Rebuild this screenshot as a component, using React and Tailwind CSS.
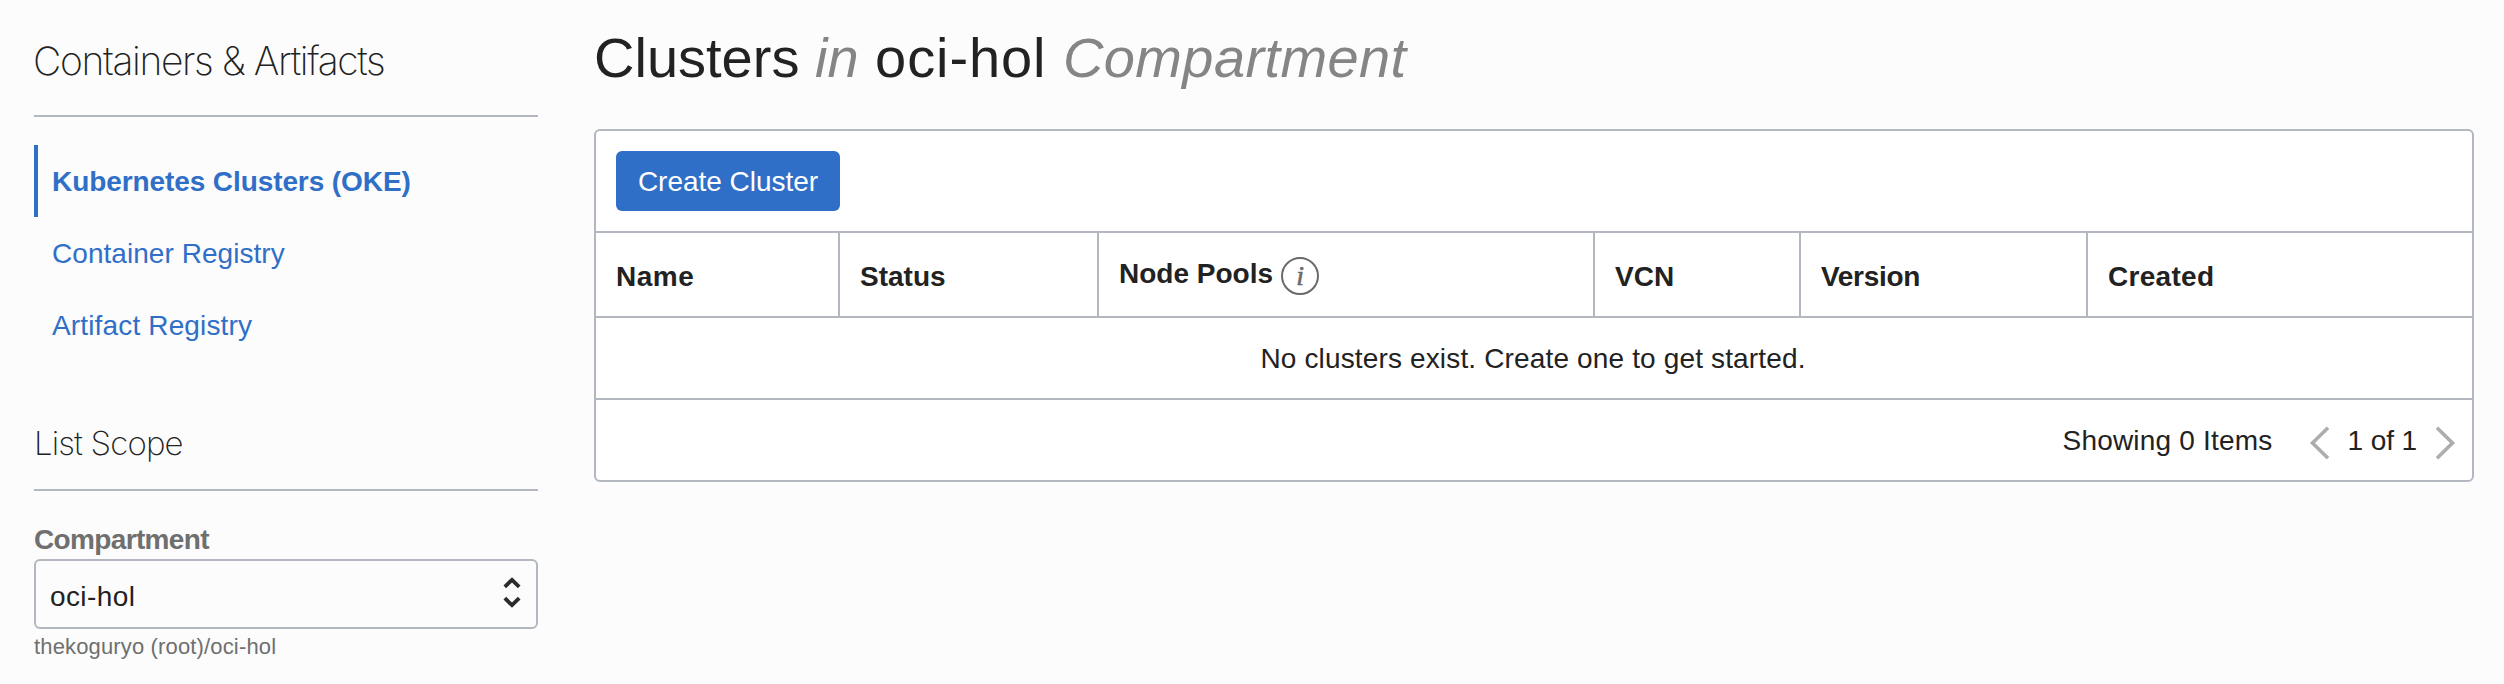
const NAV_ITEMS = [
  { label: "Kubernetes Clusters (OKE)", active: true, className: "font-bold tracking-[-0.09px]" },
  { label: "Container Registry", className: "tracking-[0.05px]" },
  { label: "Artifact Registry", className: "tracking-[0.15px]" },
];

const HEADING_FONT = "font-['Inter','Liberation_Sans',sans-serif]";

function Sidebar() {
  return (
    <aside className="w-[504px] shrink-0">
      <h2
        className={`${HEADING_FONT} h-[117px] whitespace-nowrap border-b-2 border-[#b3b8c0] pt-[41px] text-[39px] font-[150] leading-[40px] tracking-[-1.35px] text-[#222]`}
      >
        <span className="-ml-px">Containers &amp; Artifacts</span>
      </h2>

      <nav className="mt-7 flex flex-col">
        {NAV_ITEMS.map((item) => (
          <a
            key={item.label}
            href="#"
            className={`flex h-18 items-center border-l-4 pl-[14px] pt-0.5 text-[28px] leading-8 text-[#306fc8] ${
              item.active ? "border-[#306fc8]" : "border-transparent"
            } ${item.className}`}
          >
            {item.label}
          </a>
        ))}
      </nav>

      <h3
        className={`${HEADING_FONT} mt-[62px] h-[68px] whitespace-nowrap border-b-2 border-[#b3b8c0] text-[33px] font-[150] leading-[40px] tracking-[-0.85px] text-[#222]`}
      >
        List Scope
      </h3>

      <div className="mt-[32px] flex flex-col">
        <label className="h-9 text-[28px] font-bold leading-[34px] tracking-[-0.65px] text-[#6f6f6f]">
          Compartment
        </label>
        <button
          type="button"
          className="flex h-[70px] items-center justify-between rounded-md border-2 border-[#b3b8c0] pl-[14px] pr-[15px] text-[28px] leading-8 tracking-[0.4px] text-[#222]"
        >
          <span className="pt-[5px]">oci-hol</span>
          <svg width="18" height="32" viewBox="0 0 18 32" fill="none" stroke="#2b2b2b" strokeWidth="3.800" className="mb-0.5">
            <path d="M1.800 9.800 9 2.800l7.200 7" />
            <path d="M1.800 21.200 9 28.200l7.200-7" />
          </svg>
        </button>
        <p className="mt-1 text-[22px] leading-7 tracking-[0.15px] text-[#6f6f6f]">thekoguryo (root)/oci-hol</p>
      </div>
    </aside>
  );
}

function InfoIcon() {
  return (
    <span className="flex size-[38px] items-center justify-center rounded-full border-2 border-[#6a6a6a] font-['Liberation_Serif',serif] text-[28px] italic font-normal leading-none text-[#6a6a6a] [-webkit-text-stroke:0.6px_#6a6a6a]">
      i
    </span>
  );
}

function HeaderCell({ children, className = "" }) {
  return (
    <div role="columnheader" className={`flex items-center border-[#b3b8c0] pl-5 pt-1 ${className}`}>
      {children}
    </div>
  );
}

function ClusterTable() {
  return (
    <section className="mt-[55px] flex h-[353px] w-[1880px] flex-col rounded-md border-2 border-[#b3b8c0] bg-white text-[28px] leading-8">
      <div className="flex h-[100px] items-center pl-5">
        <button
          type="button"
          className="h-[60px] w-[224px] rounded-md bg-[#306fc8] pt-0.5 text-center tracking-[-0.02px] text-white"
        >
          Create Cluster
        </button>
      </div>

      <div
        role="row"
        className="grid h-[87px] grid-cols-[244px_259px_496px_206px_287px_1fr] border-y-2 border-[#b3b8c0] font-bold"
      >
        <HeaderCell className="border-r-2 tracking-[0.5px]">Name</HeaderCell>
        <HeaderCell className="border-r-2">Status</HeaderCell>
        <HeaderCell className="border-r-2">
          <span className="-mt-[6px]">Node Pools</span>
          <span className="-mt-0.5 ml-2">
            <InfoIcon />
          </span>
        </HeaderCell>
        <HeaderCell className="border-r-2">VCN</HeaderCell>
        <HeaderCell className="border-r-2 tracking-[-0.3px]">Version</HeaderCell>
        <HeaderCell className="tracking-[0.3px]">Created</HeaderCell>
      </div>

      <div className="flex h-[82px] items-center justify-center border-b-2 border-[#b3b8c0] pr-0.5 pt-0.5 tracking-[0.15px]">
        No clusters exist. Create one to get started.
      </div>

      <div className="flex h-20 items-center justify-end pr-[16px]">
        <span className="pt-0.5 tracking-[0.2px]">Showing 0 Items</span>
        <svg width="21" height="34" viewBox="0 0 21 34" fill="none" stroke="#adadad" strokeWidth="3.600" className="ml-9 mt-[6px]">
          <path d="M19 1.800 3.500 17 19 32.200" />
        </svg>
        <span className="mx-[18px] pt-0.5 tracking-[-0.1px]">1 of 1</span>
        <svg width="21" height="34" viewBox="0 0 21 34" fill="none" stroke="#adadad" strokeWidth="3.600" className="mt-[6px]">
          <path d="M2 1.800 17.500 17 2 32.200" />
        </svg>
      </div>
    </section>
  );
}

export default function App() {
  return (
    <div className="flex h-[684px] w-[2504px] gap-14 overflow-hidden bg-[#fcfcfc] pl-[34px] font-['Liberation_Sans',Arial,sans-serif] text-[#222]">
      <Sidebar />
      <main>
        <h1 className="mt-[26px] h-[48px] whitespace-nowrap text-[56px] leading-[64px]">
          Clusters <em className="text-[#858585]">in</em>{" "}
          <span className="ml-px tracking-[0.9px]">oci-hol</span>{" "}
          <em className="ml-px tracking-[0.4px] text-[#858585]">Compartment</em>
        </h1>
        <ClusterTable />
      </main>
    </div>
  );
}
